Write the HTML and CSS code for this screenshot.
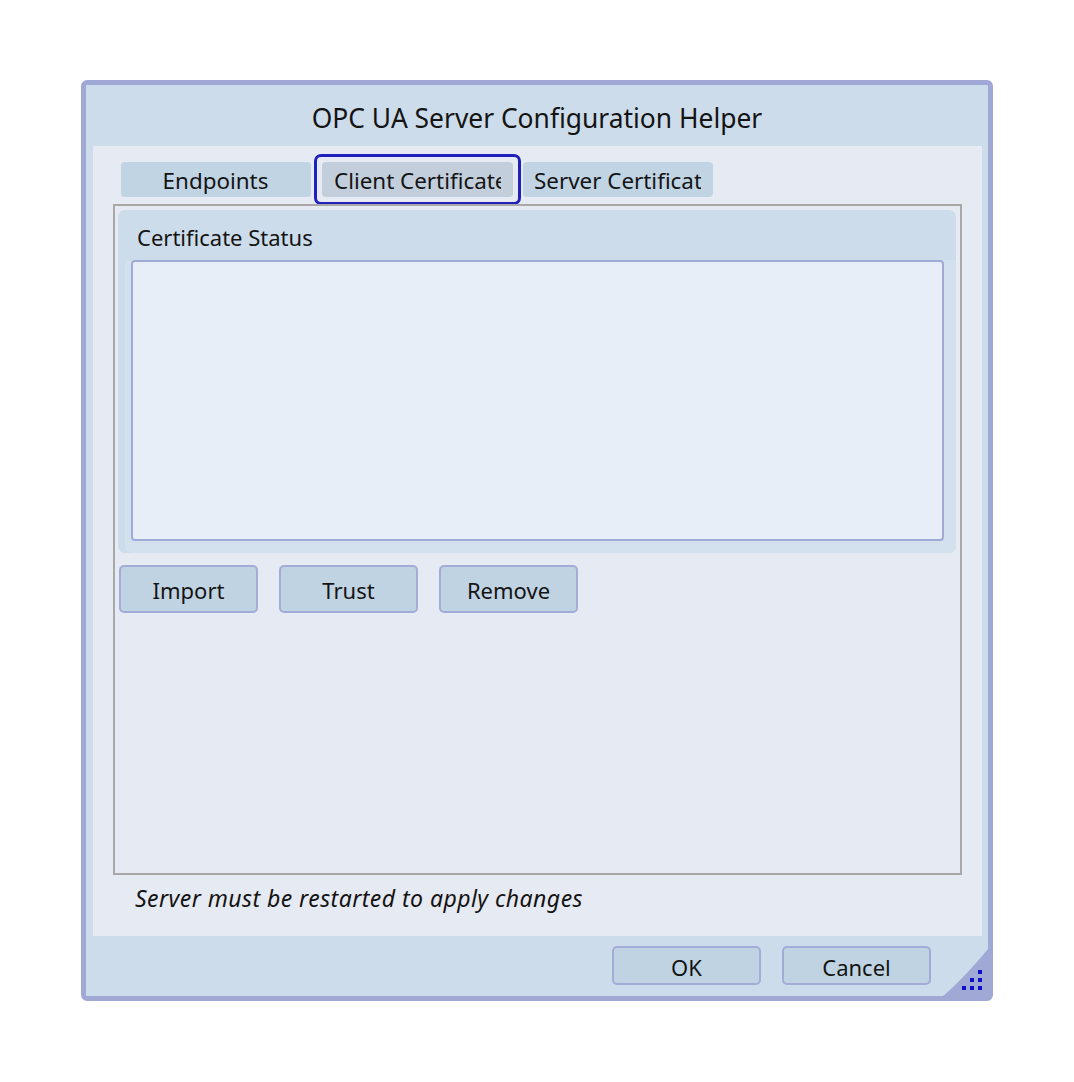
FILE: index.html
```html
<!DOCTYPE html>
<html>
<head>
<meta charset="utf-8">
<link rel="stylesheet" href="styles.css">
</head>
<body>
<div class="window">
  <div class="titlebar">OPC UA Server Configuration Helper</div>
  <div class="panel">
    <div class="tabs">
      <div class="tab"><span class="tab-label">Endpoints</span></div>
      <div class="tab-focus"><div class="tab selected"><span class="tab-label">Client Certificate</span></div></div>
      <div class="tab"><span class="tab-label">Server Certificate</span></div>
    </div>
    <div class="tabbody">
      <div class="group">
        <div class="group-head">Certificate Status</div>
        <div class="group-inner">
          <div class="listbox"></div>
        </div>
      </div>
      <div class="actions">
        <div class="btn">Import</div>
        <div class="btn">Trust</div>
        <div class="btn">Remove</div>
      </div>
    </div>
    <div class="note">Server must be restarted to apply changes</div>
  </div>
  <div class="footer">
    <div class="btn dlg">OK</div>
    <div class="btn dlg">Cancel</div>
    <div class="grip">
      <svg width="50" height="50" viewBox="0 0 50 50">
        <path d="M5 50 Q24 34 50 3 L50 50 Z" fill="#a0a9d5"/>
        <rect x="40" y="24" width="4" height="4" fill="#1010c8"/>
        <rect x="32" y="32" width="4" height="4" fill="#1010c8"/>
        <rect x="40" y="32" width="4" height="4" fill="#1010c8"/>
        <rect x="24" y="40" width="4" height="4" fill="#1010c8"/>
        <rect x="32" y="40" width="4" height="4" fill="#1010c8"/>
        <rect x="40" y="40" width="4" height="4" fill="#1010c8"/>
      </svg>
    </div>
  </div>
</div>
</body>
</html>
```
FILE: styles.css
```css
* { box-sizing: border-box; }
body {
  margin: 0;
  background: #ffffff;
  font-family: "Noto Sans", "Open Sans", sans-serif;
  color: #141414;
}
.window {
  margin: 80px 0 0 81px;
  width: 912px;
  height: 921px;
  border: 5px solid #a0a9d5;
  border-radius: 6px;
  background: #cddcea;
  display: flex;
  flex-direction: column;
  overflow: hidden;
}
.titlebar {
  height: 61px;
  display: flex;
  align-items: center;
  justify-content: center;
  font-size: 26.4px;
  padding-top: 4px;
}
.panel {
  margin: 0 6px 0 7px;
  height: 790px;
  background: #e6eaf2;
  padding: 8px 20px 0 20px;
  display: flex;
  flex-direction: column;
}
.tabs {
  display: flex;
  align-items: center;
  height: 51px;
  padding-left: 8px;
  margin-bottom: -1px;
}
.tab {
  width: 190px;
  height: 35px;
  background: #c0d4e4;
  border-radius: 4px;
  font-size: 22.4px;
  line-height: 38px;
  padding: 0 12px 0 11px;
  display: flex;
  justify-content: center;
}
.tab-label {
  display: block;
  white-space: nowrap;
  overflow: hidden;
  max-width: 100%;
  text-align: left;
}
.tab-focus {
  border: 3px solid #2020bb;
  border-radius: 7px;
  padding: 5px;
  margin: 0 2px 0 3px;
  height: 51px;
  width: 207px;
}
.tab.selected {
  width: 191px;
  background: #c2cedb;
  padding-left: 12px;
  justify-content: flex-start;
}
.tabs > .tab:last-child {
  justify-content: flex-start;
}
.tabbody {
  height: 671px;
  border: 2px solid #a8a8a8;
  padding: 4px 4px 0 3px;
}
.group {
  height: 343px;
  background: #cddcea;
  border-radius: 7px;
  display: flex;
  flex-direction: column;
}
.group-head {
  height: 50px;
  font-size: 22px;
  padding: 12px 0 0 19px;
}
.group-inner {
  flex: 1;
  margin-left: 7px;
  padding: 0 12px 12px 6px;
  background: #d3e0ed;
  border-radius: 0 0 7px 7px;
}
.listbox {
  height: 100%;
  background: #e8eef7;
  border: 2px solid #a0aad7;
  border-radius: 4px;
}
.actions {
  display: flex;
  gap: 21px;
  margin-top: 12px;
  padding-left: 1px;
}
.btn {
  width: 139px;
  height: 48px;
  background: #c0d3e2;
  border: 2px solid #a3acd8;
  border-radius: 5px;
  font-size: 22px;
  display: flex;
  align-items: center;
  justify-content: center;
  padding-top: 2px;
}
.note {
  font-style: italic;
  font-size: 23px;
  letter-spacing: 0.45px;
  padding: 7px 0 0 22px;
}
.footer {
  flex: 1;
  display: flex;
  align-items: flex-start;
  justify-content: flex-end;
  gap: 21px;
  padding: 10px 57px 0 0;
  position: relative;
}
.btn.dlg {
  width: 149px;
  height: 39px;
}
.grip {
  position: absolute;
  right: 0;
  bottom: 0;
  width: 50px;
  height: 50px;
  line-height: 0;
}
```
